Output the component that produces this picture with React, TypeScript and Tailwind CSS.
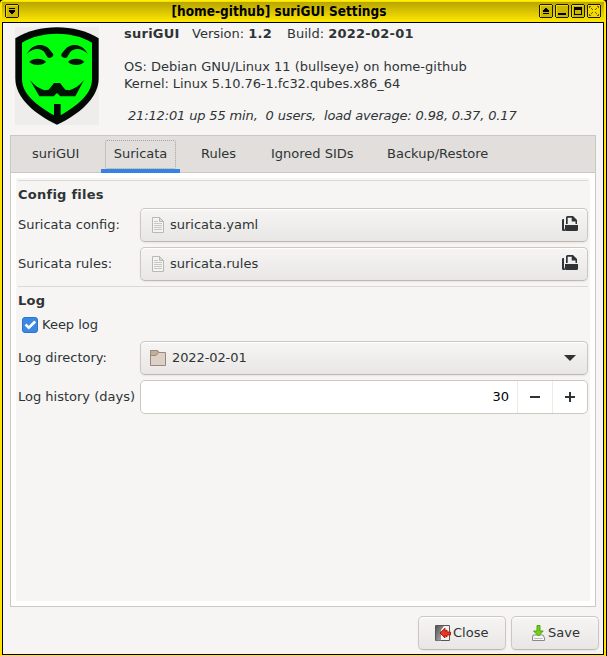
import React from 'react';

function ShieldLogo() {
  return (
    <svg className="mt-px h-[98px] w-[84px] bg-[#eeedec]" viewBox="15 15 252 294">
      <defs>
        <clipPath id="s"><rect x="15" y="15" width="252" height="294" /></clipPath>
      </defs>
      <g clipPath="url(#s)">
        <path d="M141 16C185 16 232 27 266 49V170C266 228 205 278 141 308C77 278 16 228 16 170V49C50 27 97 16 141 16Z" fill="#020802" />
        <path d="M141 35C178 35 216 43 246 62V172C246 216 203 251 152 280V246H132V280C80 251 36 216 36 172V62C66 43 104 35 141 35Z" fill="#00ff0a" />
        <g fill="#021402">
          <path d="M50 97C61 75 78 68 94 69C112 71 121 84 130 97C131 105 118 112 112 105C105 92 99 81 83 81C69 81 59 87 50 97Z" />
          <path d="M234 97C223 75 206 68 190 69C172 71 163 84 154 97C151 105 166 112 172 105C179 92 185 81 201 81C215 81 225 87 234 97Z" />
          <path d="M58 120C70 107 96 107 108 120C96 132 70 132 58 120Z" />
          <path d="M174 120C186 107 211 107 223 120C211 132 186 132 174 120Z" />
          <path d="M60 174C72 190 87 199 103 205L116 203L132 183H150L166 203L179 205C195 199 210 190 222 174L196 223H151L141 213L131 223H88Z" />
        </g>
      </g>
    </svg>
  );
}

function TitleButton({ children }: { children: React.ReactNode }) {
  return (
    <svg className="size-[14px] shrink-0" viewBox="0 0 14 14" shapeRendering="crispEdges">
      <path d="M1 0H13V1H14V13H13V14H1V13H0V1H1Z" fill="#1c1800" />
      <rect x="1" y="1" width="12" height="12" fill="#f0d800" />
      <rect x="2" y="2" width="11" height="11" fill="#cdb800" />
      {children}
    </svg>
  );
}

function TitleBar() {
  return (
    <div className="flex h-[21px] shrink-0 items-start border-t border-[#f7e100] bg-linear-to-b from-[#b9a500] to-[#ffe900] px-[3px] pt-[2px]">
      <TitleButton>
        <path d="M4 4H10V5H4ZM4 6H10V8H9V9H8V10H6V9H5V8H4Z" fill="#000" />
      </TitleButton>
      <div className="flex-1 text-center font-['DejaVu_Sans',sans-serif] text-[13.5px] leading-[14px] font-bold text-black">
        <span className="whitespace-nowrap [font-stretch:condensed]">[home-github] suriGUI Settings</span>
      </div>
      <div className="flex gap-[2px]">
        <TitleButton>
          <path d="M6 4H8V5H9V6H10V8H4V6H5V5H6ZM4 9H10V10H4Z" fill="#000" />
        </TitleButton>
        <TitleButton><path d="M3 9H11V11H3Z" fill="#000" /></TitleButton>
        <TitleButton>
          <path d="M3 3H11V11H3ZM4 6V10H10V6Z" fill="#000" fillRule="evenodd" />
        </TitleButton>
        <TitleButton>
          <rect x="1" y="1" width="12" height="12" fill="#f0d800" />
          <path d="M2 2h2v1H3v1H2ZM10 2h2v2h-1V3h-1ZM4 4h1v1H4ZM9 4h1v1H9ZM5 5h1v1H5ZM8 5h1v1H8ZM5 8h1v1H5ZM8 8h1v1H8ZM4 9h1v1H4ZM9 9h1v1H9ZM2 10h1v1h1v1H2ZM11 10h1v2h-2v-1h1Z" fill="#6b5e00" />
        </TitleButton>
      </div>
    </div>
  );
}

const surface =
  'flex h-[34px] items-center rounded-[5px] border border-[#cdc7c2] border-b-[#bfb8b1] bg-linear-to-b from-[#f6f5f4] to-[#e9e7e5] shadow-[inset_0_1px_#fff,0_1px_2px_rgba(0,0,0,0.07)]';

function PageIcon() {
  return (
    <svg className="ml-[11px] h-[16px] w-[12px]" viewBox="0 0 12 16">
      <path d="M.5 .5H7.5L11.5 4.5V15.5H.5Z" fill="#f4f3f1" stroke="#bab8b3" />
      <path d="M7.5 .5V4.5H11.5Z" fill="#dedcd8" stroke="#bab8b3" />
      <path d="M2 4.5H6M2 6.5H10M2 8.5H10M2 10.5H10M2 12.5H10" stroke="#c9c7c2" />
    </svg>
  );
}

function OpenIcon() {
  return (
    <svg className="mr-[9px] mb-[2px] ml-auto h-[16px] w-[16px]" viewBox="0 0 16 16">
      <path d="M0 4.2Q0 3 1.2 3H2V12L3.4 15H1.5Q0 15 0 13.5Z" fill="#2e3436" />
      <path d="M4 8V1.5Q4 0 5.5 0H11L15 4V8H13.5V5.5H9.7V1.7H5.7V8Z" fill="#2e3436" />
      <path d="M3 9H16V13.5Q16 15 14.5 15H4.5Q3 15 3 13.5Z" fill="#2e3436" />
    </svg>
  );
}

function FileRow({ label, file }: { label: string; file: string }) {
  return (
    <div className="flex items-center">
      <div className="w-[122px]">{label}</div>
      <div className={`${surface} flex-1`}>
        <PageIcon />
        <span className="ml-[6px]">{file}</span>
        <OpenIcon />
      </div>
    </div>
  );
}

const tabs = [
  { name: 'suriGUI', cls: 'w-[48px] ml-[21px]' },
  { name: 'Suricata', cls: '' },
  { name: 'Rules', cls: 'ml-[21px] w-[36px]' },
  { name: 'Ignored SIDs', cls: 'ml-[34px] w-[82px]' },
  { name: 'Backup/Restore', cls: 'ml-[34px]' },
];

export default function App() {
  return (
    <div className="flex h-[656px] w-[607px] overflow-hidden bg-black pr-px font-['DejaVu_Sans',sans-serif] text-[13px] leading-[16px] whitespace-pre text-[#2e3436] [&_b]:tracking-[0.25px]">
      <div className="flex w-[606px] flex-col rounded-t-[4px] border-x-2 border-t border-b border-x-[#ffe500] border-t-[#fff000] border-b-[#ffe500] bg-[#f6f5f4]">
        <TitleBar />
        <div className="flex min-h-0 flex-1 flex-col border border-black">
          <div className="flex h-[112px] shrink-0 pt-[3px] pl-[12px]">
            <ShieldLogo />
            <div className="ml-[25px]">
              <div className="flex">
                <b className="w-[68px]">suriGUI</b>
                <span className="w-[95px]">Version: <b>1.2</b></span>
                <span>Build: <b>2022-02-01</b></span>
              </div>
              <div className="mt-[17px]">OS: Debian GNU/Linux 11 (bullseye) on home-github</div>
              <div className="mt-px tracking-[-0.06px]">Kernel: Linux 5.10.76-1.fc32.qubes.x86_64</div>
              <div className="mt-[16px] ml-[4px] tracking-[-0.15px] italic">21:12:01 up 55 min,  0 users,  load average: 0.98, 0.37, 0.17</div>
            </div>
          </div>

          <div className="mx-[7px] flex h-[472px] w-[586px] shrink-0 flex-col border border-[#cdc7c2] bg-white">
            <div className="flex h-[37px] shrink-0 border-b border-[#cdc7c2] bg-[#e1dedb]">
              {tabs.map((t) =>
                t.name === 'Suricata' ? (
                  <div key={t.name} className="z-10 ml-[21px] flex h-[37px] w-[79px] justify-center border-b-4 border-[#3584e4] pt-[4px]">
                    <div className="h-[29px] w-[71px] rounded-[2px] border border-dotted border-[#a5a4a1] pt-[5px] text-center">{t.name}</div>
                  </div>
                ) : (
                  <div key={t.name} className={`${t.cls} pt-[10px]`}>{t.name}</div>
                ),
              )}
            </div>
            <div className="mx-[5px] mt-[5px] h-[423px] bg-[#f6f5f4] px-[2px] pt-[2px]">
              <div className="h-px bg-[#dbd9d6]" />
              <div className="mt-[6px] h-[21px]"><b>Config files</b></div>
              <div className="flex flex-col gap-[5px]">
                <FileRow label="Suricata config:" file="suricata.yaml" />
                <FileRow label="Suricata rules:" file="suricata.rules" />
              </div>
              <div className="mt-[5px] h-px bg-[#dbd9d6]" />
              <div className="mt-[6px]"><b>Log</b></div>
              <div className="mt-[8px] ml-[4px] flex items-center">
                <svg className="size-4" viewBox="0 0 16 16">
                  <rect x=".5" y=".5" width="15" height="15" rx="2.5" fill="#3b88e5" stroke="#2b75d0" />
                  <path d="M3.5 7.5L6.8 10.7L13.2 4.5" fill="none" stroke="#fff" strokeWidth="2.6" />
                </svg>
                <span className="ml-[4px]">Keep log</span>
              </div>
              <div className="mt-[8px] flex items-center">
                <div className="w-[122px]">Log directory:</div>
                <div className={`${surface} flex-1`}>
                  <svg className="ml-[9px] size-4" viewBox="0 0 16 16">
                    <path d="M.5 .5H7.5L9 2.5H15.5V15.5H.5Z" fill="#ddd1c7" stroke="#9b8878" />
                    <path d="M.5 .5H7.5L8.5 2.5L6 5.5H.5Z" fill="#c3ad9b" stroke="#9b8878" />
                  </svg>
                  <span className="ml-[6px] tracking-[-0.1px]">2022-02-01</span>
                  <svg className="mr-[11px] ml-auto h-[6px] w-[12px]" viewBox="0 0 12 6"><path d="M0 0H12L6 6Z" fill="#2e3436" /></svg>
                </div>
              </div>
              <div className="mt-[5px] flex items-center">
                <div className="w-[122px]">Log history (days)</div>
                <div className="flex h-[34px] flex-1 items-stretch rounded-[5px] border border-[#cdc7c2] bg-white text-black">
                  <div className="flex flex-1 items-center justify-end pr-[8px]">30</div>
                  <div className="flex w-[35px] items-center justify-center border-l border-[#ebeae8]">
                    <div className="h-[2px] w-[10px] bg-[#2e3436]" />
                  </div>
                  <div className="flex w-[35px] items-center justify-center border-l border-[#ebeae8]">
                    <svg className="size-[10px]" viewBox="0 0 10 10"><path d="M4 0H6V4H10V6H6V10H4V6H0V4H4Z" fill="#2e3436" /></svg>
                  </div>
                </div>
              </div>
            </div>
          </div>

          <div className="mt-[9px] flex justify-end gap-[5px] pr-[4px]">
            <div className={`${surface} w-[88px] pl-[16px]`}>
              <svg className="size-4" viewBox="0 0 16 16">
                <defs>
                  <linearGradient id="d" x1="0" y1="0" x2="1" y2="1"><stop stopColor="#555" /><stop offset="1" stopColor="#b8b8b8" /></linearGradient>
                </defs>
                <path d="M.5 .5H14.5V15.5H.5Z" fill="#f3f3f1" stroke="#555753" />
                <path d="M1 1H9L6 5V15.5H1Z" fill="url(#d)" />
                <path d="M5 8L10 3.2V6L12 5V7H15.5V10H12V12L10 10.5V13Z" fill="#e43a22" stroke="#a40000" strokeWidth=".8" />
              </svg>
              <span className="ml-[2px]">Close</span>
            </div>
            <div className={`${surface} w-[88px] pl-[18px]`}>
              <svg className="size-4" viewBox="0 0 16 16">
                <path d="M3 10H13L14.5 13V15.5H2.5V13Z" fill="#f7f7f5" stroke="#888a85" />
                <path d="M4 13.5H12.5" stroke="#babdb6" />
                <path d="M7 .5H10V6H13.2L8.5 11L3.5 6H7Z" fill="#73d216" stroke="#4e9a06" strokeWidth=".9" />
              </svg>
              <span className="ml-[2px]">Save</span>
            </div>
          </div>
        </div>
      </div>
    </div>
  );
}
